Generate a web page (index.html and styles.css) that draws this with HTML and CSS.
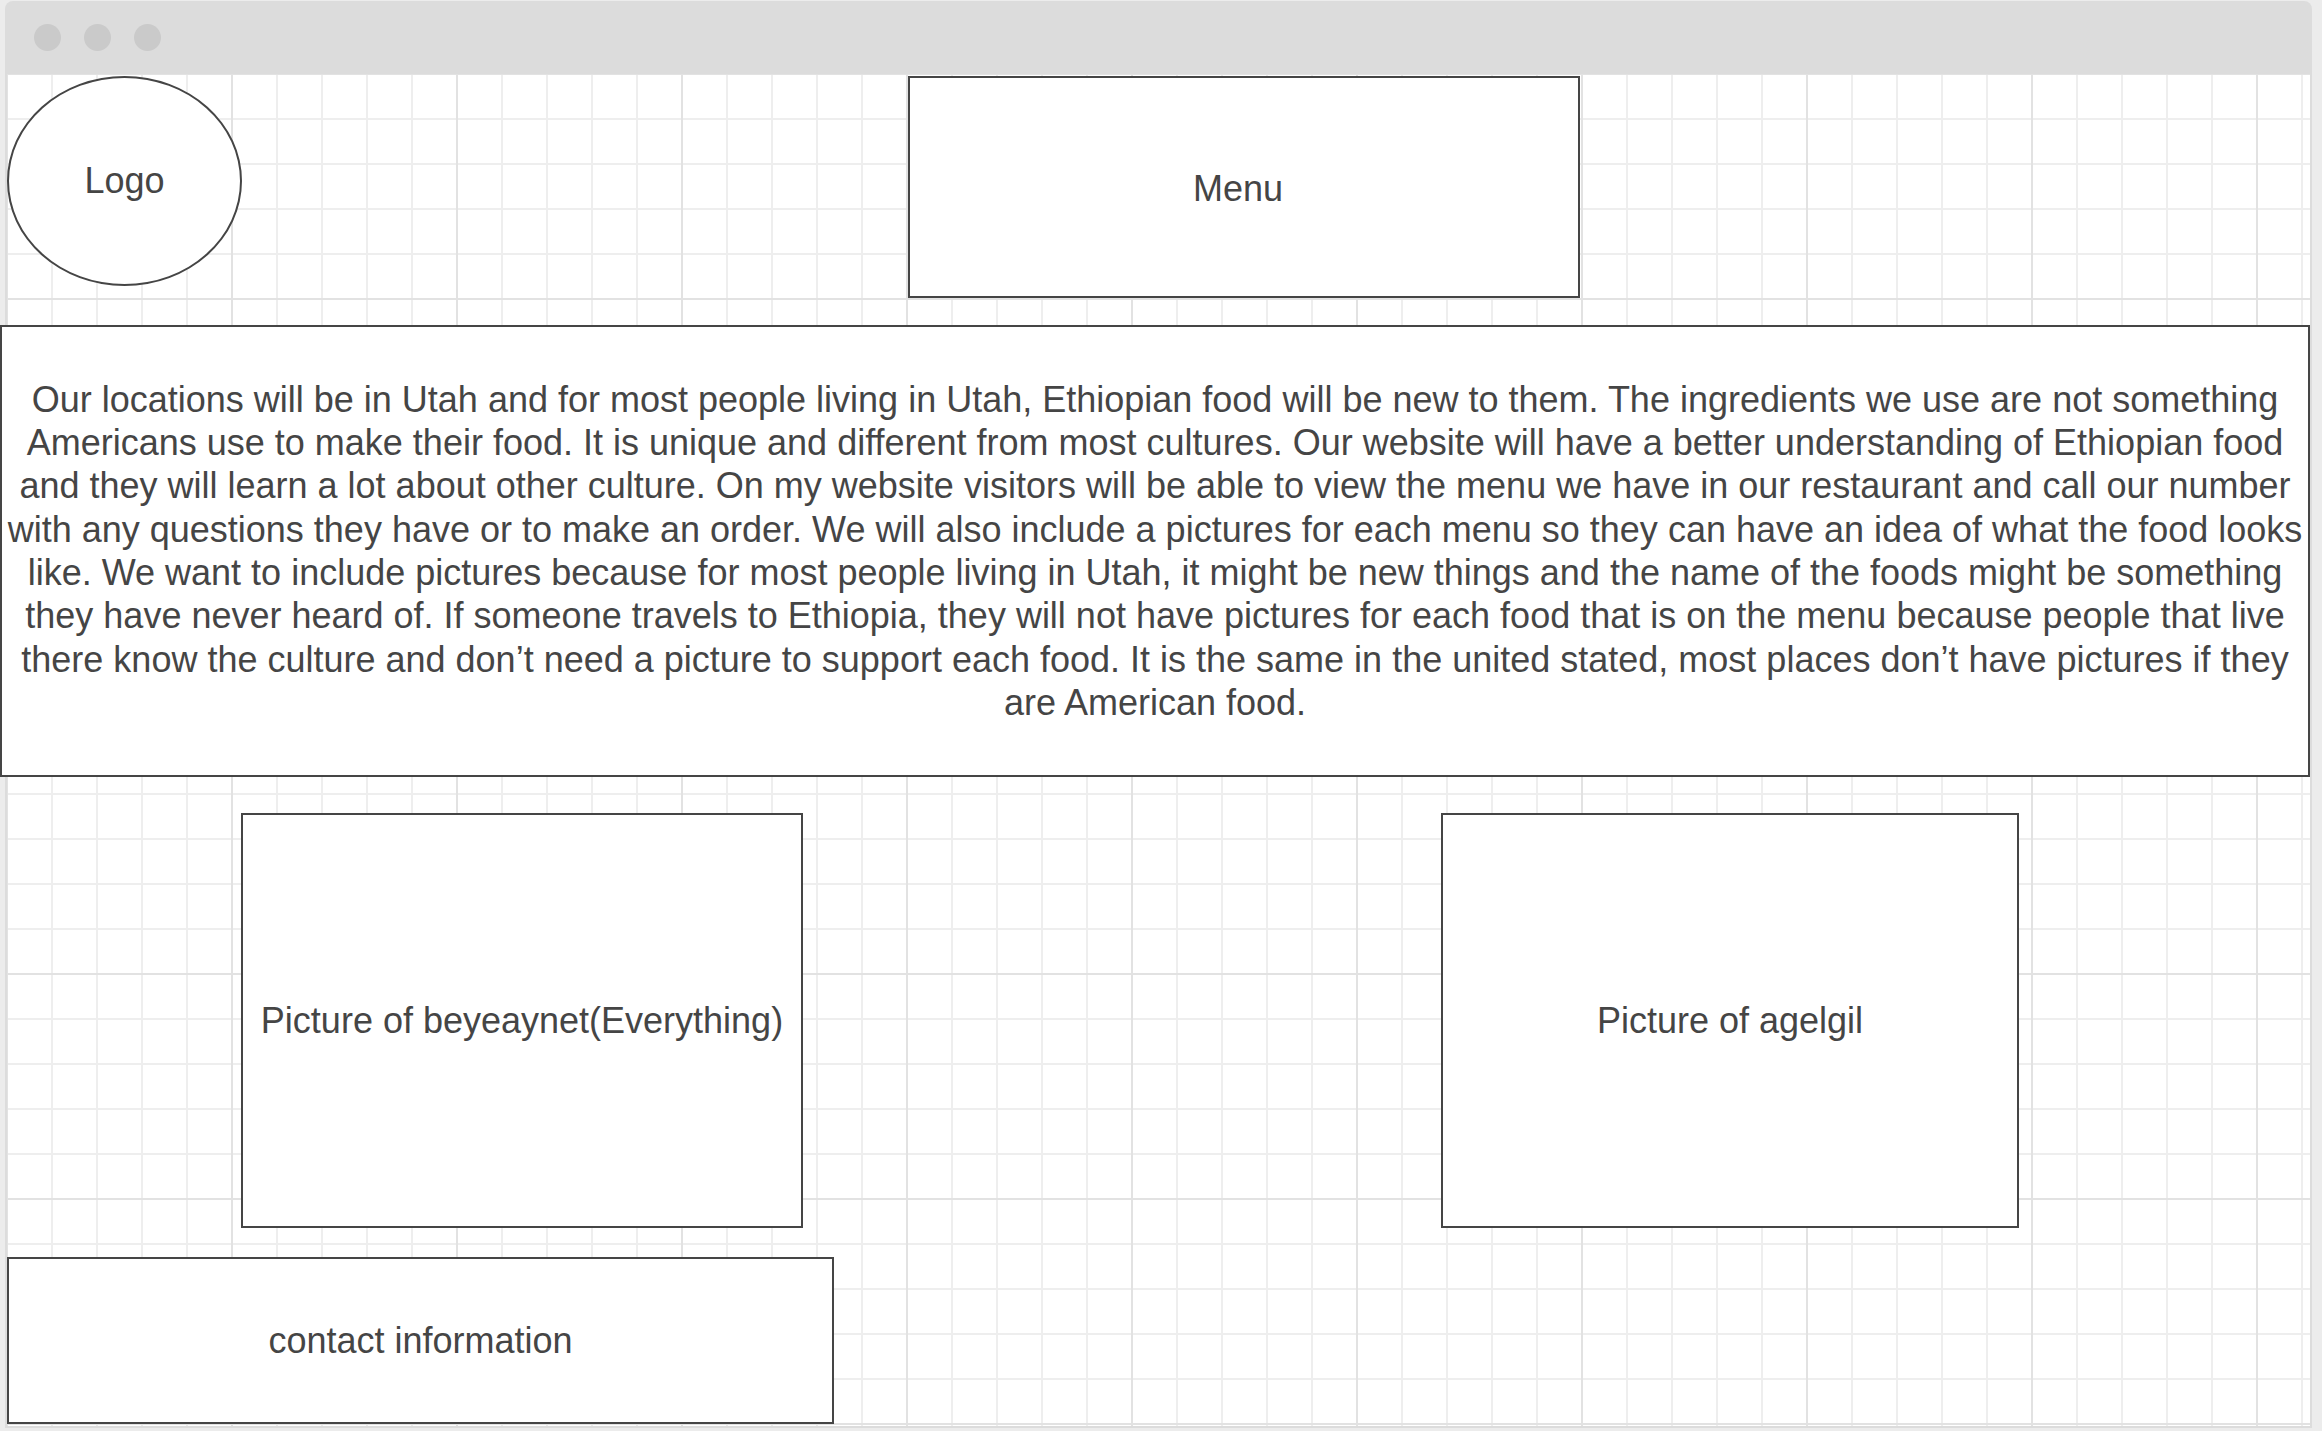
FILE: index.html
```html
<!DOCTYPE html>
<html lang="en">
<head>
<meta charset="utf-8">
<title>Ethiopian Restaurant Wireframe</title>
<link rel="stylesheet" href="styles.css">
</head>
<body>
<div class="window">
  <div class="titlebar">
    <span class="dot"></span>
    <span class="dot"></span>
    <span class="dot"></span>
  </div>
  <div class="canvas">
    <div class="header">
      <div class="shape logo">Logo</div>
      <div class="shape menu">Menu</div>
    </div>
    <div class="shape intro">
      <p class="intro-text">Our locations will be in Utah and for most people living in Utah, Ethiopian food will be new to them. The ingredients we use are not something<br>Americans use to make their food. It is unique and different from most cultures. Our website will have a better understanding of Ethiopian food<br>and they will learn a lot about other culture. On my website visitors will be able to view the menu we have in our restaurant and call our number<br>with any questions they have or to make an order. We will also include a pictures for each menu so they can have an idea of what the food looks<br>like. We want to include pictures because for most people living in Utah, it might be new things and the name of the foods might be something<br>they have never heard of. If someone travels to Ethiopia, they will not have pictures for each food that is on the menu because people that live<br>there know the culture and don’t need a picture to support each food. It is the same in the united stated, most places don’t have pictures if they<br>are American food.</p>
    </div>
    <div class="pictures">
      <div class="shape pic pic-one">Picture of beyeaynet(Everything)</div>
      <div class="shape pic pic-two">Picture of agelgil</div>
    </div>
    <div class="shape contact">contact information</div>
  </div>
</div>
</body>
</html>
```

FILE: styles.css
```css
html, body {
  margin: 0;
  padding: 0;
  background: #ececec;
}

body {
  width: 2322px;
  height: 1431px;
  overflow: hidden;
  padding: 1px 0 0 5px;
  box-sizing: border-box;
  font-family: "Liberation Sans", Arial, sans-serif;
  color: #454545;
}

.window {
  width: 2307px;
  height: 1427px;
  background: #dcdcdc;
  border-radius: 8px 8px 0 0;
  padding: 0 2px 2px 2px;
  box-sizing: border-box;
  display: flex;
  flex-direction: column;
}

.titlebar {
  height: 73px;
  flex: none;
  display: flex;
  align-items: center;
  gap: 23px;
  padding-left: 27px;
  padding-bottom: 1px;
  box-sizing: border-box;
}

.dot {
  width: 27px;
  height: 27px;
  border-radius: 50%;
  background: #cacaca;
}

.canvas {
  flex: 1;
  background-color: #ffffff;
  background-image:
    linear-gradient(to right, #e2e2e2 2px, transparent 2px),
    linear-gradient(to bottom, #e2e2e2 2px, transparent 2px),
    linear-gradient(to right, #eeeeee 2px, transparent 2px),
    linear-gradient(to bottom, #eeeeee 2px, transparent 2px);
  background-size: 225px 225px, 225px 225px, 45px 45px, 45px 45px;
  background-position: -1px -1px, -1px -1px, -1px -1px, -1px -1px;
  display: flex;
  flex-direction: column;
  align-items: flex-start;
}

.shape {
  background: #ffffff;
  border: 2px solid #454545;
  box-sizing: border-box;
  display: flex;
  align-items: center;
  justify-content: center;
  text-align: center;
  font-size: 36px;
  flex: none;
}

.header {
  display: flex;
  align-items: flex-start;
  padding-top: 2px;
}

.logo {
  width: 235px;
  height: 210px;
  border-radius: 50%;
}

.menu {
  margin-left: 666px;
  width: 672px;
  height: 222px;
  padding: 3px 12px 0 0;
}

.intro {
  margin-top: 27px;
  margin-left: -7px;
  width: 2310px;
  height: 452px;
}

.intro-text {
  margin: 0;
  line-height: 43.3px;
  white-space: nowrap;
}

.pictures {
  display: flex;
  margin-top: 36px;
}

.pic {
  height: 415px;
}

.pic-one {
  margin-left: 234px;
  width: 562px;
}

.pic-two {
  margin-left: 638px;
  width: 578px;
}

.contact {
  margin-top: 29px;
  width: 827px;
  height: 167px;
}
```
